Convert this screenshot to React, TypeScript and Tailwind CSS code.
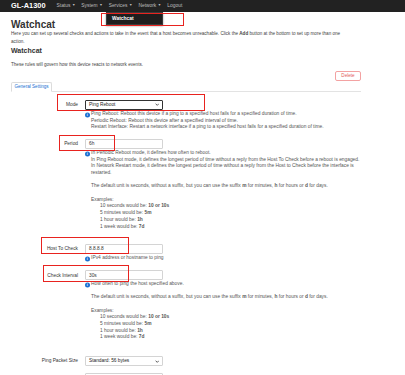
import React from 'react';

const navItems = ['Status', 'System', 'Services', 'Network'];

function InfoIcon() {
  return (
    <span className="mr-[1.5px] inline-flex h-[4.6px] w-[4.6px] translate-y-[0.6px] items-center justify-center rounded-full bg-[#1a6fd1] align-baseline text-[3.6px] font-bold leading-none text-white">
      i
    </span>
  );
}

function Chevron() {
  return (
    <svg viewBox="0 0 8 5" className="h-[3px] w-[4.5px]">
      <polyline points="1,1 4,4 7,1" fill="none" stroke="#333" strokeWidth="1.4" />
    </svg>
  );
}

function Highlight({ className }: { className: string }) {
  return <div className={`pointer-events-none absolute border-[1.5px] border-[#e8231f] ${className}`} />;
}

function Row({
  label,
  children,
  highlight,
  className = '',
}: {
  label: string;
  children: React.ReactNode;
  highlight?: string;
  className?: string;
}) {
  return (
    <div className={`relative flex items-center ${className}`}>
      <div className="w-[74px] pr-[7px] text-right text-[4.8px] text-[#333]">{label}</div>
      {children}
      {highlight && <Highlight className={highlight} />}
    </div>
  );
}

function TextBox({ value }: { value?: string }) {
  return (
    <div className="flex h-[10px] w-[78px] items-center rounded-[1px] border border-[#d4d4d4] px-[3px] text-[4.8px] text-[#333]">
      {value}
    </div>
  );
}

function SelectBox({ value, dark }: { value: string; dark?: boolean }) {
  return (
    <div
      className={`flex h-[10px] w-[78px] items-center justify-between rounded-[1px] border px-[3px] text-[4.8px] text-[#222] ${
        dark ? 'border-[#333]' : 'border-[#d4d4d4]'
      }`}
    >
      <span>{value}</span>
      <Chevron />
    </div>
  );
}

function Help({ lines, className = '' }: { lines: React.ReactNode[]; className?: string }) {
  return (
    <div className={`ml-[74px] text-[4.85px] leading-[6.7px] text-[#555] ${className}`}>
      {lines.map((line, i) => (
        <div key={i} className={i === 0 ? 'whitespace-nowrap' : 'whitespace-nowrap pl-[6px]'}>
          {i === 0 && <InfoIcon />}
          {line}
        </div>
      ))}
    </div>
  );
}

function DurationNote() {
  const examples: [string, string][] = [
    ['10 seconds would be: ', '10 or 10s'],
    ['5 minutes would be: ', '5m'],
    ['1 hour would be: ', '1h'],
    ['1 week would be: ', '7d'],
  ];
  return (
    <div className="ml-[80px] text-[4.85px] leading-[6.7px] text-[#555]">
      <div className="h-[6.7px]" />
      <div className="whitespace-nowrap">
        The default unit is seconds, without a suffix, but you can use the suffix <b>m</b> for minutes,{' '}
        <b>h</b> for hours or <b>d</b> for days.
      </div>
      <div className="h-[6.7px]" />
      <div>Examples:</div>
      {examples.map(([a, b]) => (
        <div key={a} className="pl-[9px]">
          {a}
          <b>{b}</b>
        </div>
      ))}
    </div>
  );
}

export default function App() {
  return (
    <div className="relative h-[375px] w-[405px] overflow-hidden bg-white font-['Liberation_Sans',Arial,sans-serif] text-[#333]">
      <nav className="flex h-[12px] items-center bg-[#222] pl-[11px]">
        <span className="text-[7.4px] font-bold leading-none text-white">GL-A1300</span>
        <ul className="ml-[11px] flex items-center gap-[6px] text-[4.9px] leading-none text-[#bdbdbd]">
          {navItems.map((item) => (
            <li key={item} className="flex items-center gap-[1.5px]">
              {item}
              <span className="text-[3.5px]">▼</span>
            </li>
          ))}
          <li>Logout</li>
        </ul>
      </nav>

      {/* open services menu */}
      <div className="absolute left-[106px] top-[12px] flex h-[13px] w-[57px] items-center border border-[#3a3a3a] bg-[#1e1e1e] pl-[5px] text-[4.9px] font-bold text-white shadow-[0_1px_2px_rgba(0,0,0,0.4)]">
        Watchcat
      </div>
      <Highlight className="left-[101px] top-[13px] h-[13px] w-[83px]" />

      <main className="px-[11px]">
        <h2 className="mt-[7.5px] text-[10px] font-bold leading-[10px] text-[#333]">Watchcat</h2>
        <p className="mt-[0.5px] w-[342px] text-[4.6px] leading-[7.7px] text-[#444]">
          Here you can set up several checks and actions to take in the event that a host becomes unreachable.
          Click the <b>Add</b> button at the bottom to set up more than one action.
        </p>
        <h3 className="mt-[2px] text-[7px] font-bold leading-[8px] text-[#333]">Watchcat</h3>
        <p className="mt-[5.5px] text-[4.6px] leading-[7px] text-[#444]">
          These rules will govern how this device reacts to network events.
        </p>

        <div className="flex w-[350px] justify-end">
          <button className="mt-[3.5px] h-[10px] w-[26px] rounded-[2px] border border-[#f3a2a2] bg-white text-[4.6px] leading-none text-[#e25c5c]">
            Delete
          </button>
        </div>

        <div className="mt-[1px] flex w-[350px] items-end border-b border-[#e3e3e3]">
          <div className="-mb-px flex h-[10px] w-[41px] items-center justify-center rounded-t-[2px] border border-b-white border-[#dcdcdc] bg-white text-[4.6px] text-[#1a6fd1]">
            General Settings
          </div>
        </div>

        <Row label="Mode" className="mt-[7.5px]" highlight="left-[46px] -top-[5.5px] h-[17px] w-[148px]">
          <SelectBox value="Ping Reboot" dark />
        </Row>
        <Help
          className="mt-[1px]"
          lines={[
            'Ping Reboot: Reboot this device if a ping to a specified host fails for a specified duration of time.',
            'Periodic Reboot: Reboot this device after a specified interval of time.',
            'Restart Interface: Restart a network interface if a ping to a specified host fails for a specified duration of time.',
          ]}
        />

        <Row label="Period" className="mt-[7.7px]" highlight="left-[48px] -top-[3.5px] h-[16px] w-[56px]">
          <TextBox value="6h" />
        </Row>
        <Help
          className="mt-[1.2px]"
          lines={[
            'In Periodic Reboot mode, it defines how often to reboot.',
            'In Ping Reboot mode, it defines the longest period of time without a reply from the Host To Check before a reboot is engaged.',
            'In Network Restart mode, it defines the longest period of time without a reply from the Host to Check before the interface is',
            'restarted.',
          ]}
        />
        <DurationNote />

        <Row label="Host To Check" className="mt-[13.5px]" highlight="left-[30px] -top-[6.5px] h-[17px] w-[88px]">
          <TextBox value="8.8.8.8" />
        </Row>
        <Help className="mt-[1px]" lines={['IPv4 address or hostname to ping']} />

        <Row label="Check Interval" className="mt-[8.6px]" highlight="left-[32px] -top-[5px] h-[17px] w-[86px]">
          <TextBox value="30s" />
        </Row>
        <Help className="mt-[0.7px]" lines={['How often to ping the host specified above.']} />
        <DurationNote />

        <Row label="Ping Packet Size" className="mt-[15px]">
          <SelectBox value="Standard: 56 bytes" />
        </Row>
        <Row label="" className="mt-[7px]">
          <TextBox />
        </Row>
      </main>
    </div>
  );
}
